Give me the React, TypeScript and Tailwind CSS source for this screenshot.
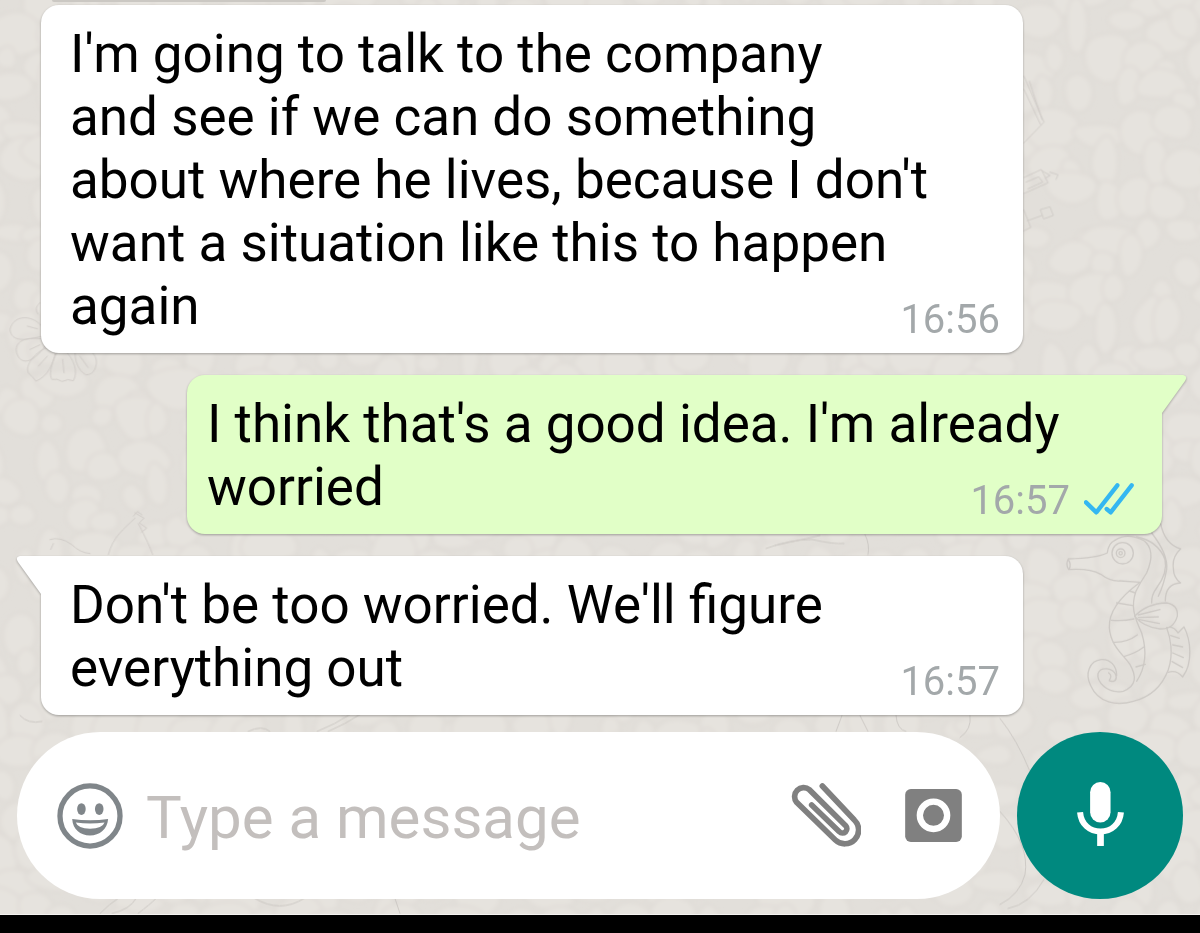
import type { ReactNode } from "react";

type Message = {
    id: number;
    lines: string[];
    time: string;
    outgoing?: boolean;
    tail?: boolean;
};

const messages: Message[] = [
    {
        id: 1,
        lines: [
            "I'm going to talk to the company",
            "and see if we can do something",
            "about where he lives, because I don't",
            "want a situation like this to happen",
            "again",
        ],
        time: "16:56",
    },
    {
        id: 2,
        lines: ["I think that's a good idea. I'm already", "worried"],
        time: "16:57",
        outgoing: true,
        tail: true,
    },
    {
        id: 3,
        lines: ["Don't be too worried. We'll figure", "everything out"],
        time: "16:57",
        tail: true,
    },
];

// small seeded generator so the stones keep their shape between renders
const createRandom = (seed: number) => () => {
    seed = (seed * 16807) % 2147483647;
    return seed / 2147483647;
};

const buildStones = () => {
    const random = createRandom(421);
    const stones: string[] = [];
    for (let row = 0; row < 30; row++) {
        for (let col = 0; col < 34; col++) {
            const cx = col * 38 + (row % 2) * 18 + random() * 26 - 16;
            const cy = row * 33 + random() * 24 - 14;
            const rx = 12 + random() * 20;
            const ry = 12 + random() * 18;
            const turn = random() * Math.PI;
            const points = Array.from({ length: 6 }, (_, i) => {
                const angle = turn + (i * Math.PI) / 3;
                const k = 0.75 + random() * 0.45;
                return [cx + Math.cos(angle) * rx * k, cy + Math.sin(angle) * ry * k];
            });
            const mids = points.map(([x, y], i) => {
                const [nx, ny] = points[(i + 1) % 6];
                return [(x + nx) / 2, (y + ny) / 2];
            });
            let d = `M${mids[5][0].toFixed(1)} ${mids[5][1].toFixed(1)}`;
            points.forEach(([x, y], i) => {
                d += `Q${x.toFixed(1)} ${y.toFixed(1)} ${mids[i][0].toFixed(1)} ${mids[i][1].toFixed(1)}`;
            });
            stones.push(d + "Z");
        }
    }
    return stones;
};

const stones = buildStones();

const Wallpaper = () => (
    <svg
        className="absolute inset-0 -z-10 h-full w-full"
        viewBox="0 0 1200 915"
        preserveAspectRatio="xMidYMid slice"
        aria-hidden="true"
    >
        <defs>
            <filter id="soften">
                <feGaussianBlur stdDeviation="2" />
            </filter>
        </defs>
        <rect width="1200" height="915" fill="#e2dfda" />
        <g fill="#e6e3de" stroke="#dedad5" strokeWidth="2" filter="url(#soften)">
            {stones.map((d, i) => (
                <path key={i} d={d} />
            ))}
        </g>

        <g fill="none" stroke="#c6c2be" strokeWidth="2.5" strokeLinecap="round" strokeLinejoin="round" opacity="0.75">
            {/* seahorse */}
            <g transform="translate(1000 520) scale(0.3333)" strokeWidth="4">
                <path d="M345 62Q325 70 322 100Q290 116 205 118Q196 134 206 150Q270 146 302 164Q330 186 360 184L420 188" />
                <path d="M206 122Q214 134 208 148M345 62Q380 38 430 62Q470 92 440 160Q420 190 408 215C392 260 402 290 425 340C440 390 440 440 410 485" />
                <circle cx="368" cy="101" r="32" />
                <circle cx="362" cy="101" r="13" />
                <circle cx="362" cy="101" r="5" />
                <path d="M418 190C370 225 325 270 328 325C332 380 370 405 390 435C410 470 410 500 370 515C320 525 290 485 294 462C302 440 340 444 348 468C352 484 340 488 328 484" />
                <path d="M328 482Q338 468 326 460M350 468C350 438 330 418 304 420C268 424 254 462 272 498C295 550 350 560 400 545C460 530 490 490 505 450C522 400 510 350 500 325" />
                <path d="M388 214L406 220M350 250L398 258M334 302Q370 305 402 298M340 368Q380 370 412 346M374 410Q405 402 432 382M408 442L436 434" />
                <path d="M410 52Q475 65 495 120Q504 160 470 205Q454 226 455 250M455 40Q505 105 500 150Q492 195 475 230" />
                <path d="M482 12Q494 74 542 88Q516 112 520 145Q520 175 542 190Q496 192 496 244" />
                <path d="M404 290Q440 252 500 250Q535 256 532 290Q520 330 480 328Q430 322 404 290M415 286L480 270M415 294L475 292M418 300L478 312" />
                <path d="M500 325Q520 318 534 340L552 322C572 360 580 430 548 472Q530 450 505 458M512 348L538 356M518 376L548 382M518 400L550 414M516 426L548 444" />
            </g>

            {/* flower */}
            <g transform="scale(0.3333)">
                <path d="M126 980C90 940 38 950 30 990C34 1030 80 1022 126 1010M124 1018C70 1010 42 1030 50 1060C62 1100 100 1090 135 1040M140 1045C100 1060 75 1100 85 1120Q96 1130 108 1145C145 1130 160 1090 166 1060M170 1060C150 1100 148 1130 156 1140Q172 1136 186 1146Q205 1136 220 1144C236 1115 220 1080 200 1058M225 1060C225 1100 246 1120 258 1126Q276 1126 284 1110C296 1085 286 1068 276 1058M120 910Q100 925 114 944" />
                <path d="M82 980L112 988M90 1050L120 1036M115 1100L142 1070M188 1080L192 1120M240 1070L264 1104" />
            </g>

            {/* ruler, shells and the rest of the scribbles */}
            <g transform="translate(1000 0) scale(0.3333)">
                <path d="M72 230L132 368L72 430M72 270L122 376M88 245L126 360M72 534L124 510L144 550L72 582M78 548L116 532L128 548L84 568M128 515L150 528L136 536M150 518L174 526L168 540" />
                <path d="M72 632L92 684L72 694M82 664L126 648M122 630L150 622L160 648L132 658Z" />
            </g>
            <g transform="translate(0 530) scale(0.3333)">
                <path d="M325 75C340 20 370 0 405 -34M415 -18Q450 50 458 75M150 30Q180 20 215 45Q240 70 270 72M160 42L152 60M405 -50L432 -34L418 -20L440 -4L424 8M400 -40L412 -54L426 -44" />
            </g>
            <path strokeWidth="1" d="M766 549Q790 540 812 540Q834 545 844 544M775 546L820 536M865 535Q870 545 868 555M1000 719Q1017 740 1030 772M1000 812Q1030 845 1025 875Q1020 895 1000 905M1008 909Q1030 905 1044 880" />
            <path strokeWidth="1" d="M842 716L836 732M860 716L868 732M896 716Q897 730 906 732M970 716Q972 730 960 738M317 732Q335 725 350 715M328 732Q345 725 360 715M248 732Q262 725 270 732M100 914Q110 904 118 899M112 914Q130 910 136 899M138 914Q150 905 156 899M255 899Q280 914 304 899M395 899L400 914M20 716Q28 725 42 722" />
        </g>
    </svg>
);

const ReadTicks = () => (
    <svg className="h-8 w-[50px]" viewBox="370 366 150 96" fill="none" stroke="#34b7f1" strokeWidth="13" role="img" aria-label="Read">
        <path d="M376 424L407 454L470 373" strokeLinejoin="round" strokeLinecap="round" />
        <path d="M438 444L450 454L513 373" strokeLinejoin="round" strokeLinecap="round" />
    </svg>
);

const Bubble = ({ message }: { message: Message }) => {
    const { lines, time, outgoing, tail } = message;
    const lastLine = lines[lines.length - 1];

    return (
        <li className={outgoing ? "pl-[187px] pr-[38px]" : "pl-[41px] pr-[177px]"}>
            <article
                className={`relative rounded-[18px] pt-[18px] pb-[15px] text-[53px] leading-[63px] text-black drop-shadow-[0_1px_1px_rgba(0,0,0,0.3)] ${
                    outgoing ? "bg-[#e1ffc7] pl-5 pr-7" : "bg-white pl-[29px] pr-[23px]"
                } ${tail ? (outgoing ? "rounded-tr-none" : "rounded-tl-none") : ""}`}
            >
                {tail && (
                    <svg
                        className={`absolute top-0 h-[39px] w-[26px] ${
                            outgoing ? "left-full -ml-px text-[#e1ffc7]" : "right-full -mr-px -scale-x-100 text-white"
                        }`}
                        viewBox="0 0 26 39"
                        fill="currentColor"
                        aria-hidden="true"
                    >
                        <path d="M0 0H22Q27 1 24 6L1 38V39H0Z" />
                    </svg>
                )}
                {lines.slice(0, -1).map((line) => (
                    <p key={line}>{line}</p>
                ))}
                <div className="flex items-end justify-between">
                    <p>{lastLine}</p>
                    <div className="flex items-start gap-[14px]">
                        <time className="text-[40px] leading-9 text-[#a3a8aa]">{time}</time>
                        {outgoing && <ReadTicks />}
                    </div>
                </div>
            </article>
        </li>
    );
};

const IconButton = ({ label, children }: { label: string; children: ReactNode }) => (
    <button type="button" aria-label={label} className="shrink-0 cursor-pointer">
        {children}
    </button>
);

const Composer = () => (
    <form className="flex items-center gap-[17px] px-[17px] pb-[15px]" onSubmit={(e) => e.preventDefault()}>
        <div className="flex h-[167px] min-w-0 flex-1 items-center rounded-full bg-white pl-10 pr-[38px]">
            <IconButton label="Emoji">
                <svg className="size-[66px]" viewBox="170 186 200 200" fill="#80868a">
                    <circle cx="270" cy="286" r="91" fill="none" stroke="#80868a" strokeWidth="16" />
                    <ellipse cx="244" cy="265" rx="13" ry="18" />
                    <ellipse cx="298" cy="265" rx="13" ry="18" />
                    <path d="M216 295Q270 303 325 295C322 326 300 345 270 345C240 345 218 326 216 295Z" />
                    <path fill="#fff" d="M227 306Q270 312 314 306Q308 324 270 325Q233 324 227 306Z" />
                </svg>
            </IconButton>
            <input
                type="text"
                aria-label="Message"
                placeholder="Type a message"
                className="ml-[23px] h-20 min-w-0 flex-1 bg-transparent pt-1 text-[60px] text-black outline-none placeholder:text-[#c3bfbd]"
            />
            <div className="flex items-center gap-11">
                <IconButton label="Attach">
                    <svg className="h-[65px] w-[70px]" viewBox="93 192 210 195" fill="none" stroke="#808080" strokeWidth="17" strokeLinecap="round">
                        <path d="M187 201L283 303A40 40 0 0 1 226 363L110 250A27 27 0 0 1 148 212L257 320A13 13 0 0 1 238 338L155 258" />
                    </svg>
                </IconButton>
                <IconButton label="Camera">
                    <svg className="h-[53px] w-[57px]" viewBox="435 207 170 159">
                        <rect x="435" y="207" width="170" height="159" rx="17" fill="#808080" />
                        <circle cx="520" cy="286" r="41" fill="none" stroke="#fff" strokeWidth="19" />
                    </svg>
                </IconButton>
            </div>
        </div>
        <button
            type="button"
            aria-label="Record voice message"
            className="flex h-[167px] w-[166px] shrink-0 cursor-pointer items-center justify-center rounded-full bg-[#00897f]"
        >
            <svg className="h-[67px] w-[47px]" viewBox="230 786 140 200" fill="#fff">
                <rect x="269" y="786" width="61" height="121" rx="30.5" />
                <path d="M239 876C242 912 268 934 300 934S358 912 361 876" fill="none" stroke="#fff" strokeWidth="18" />
                <rect x="290" y="934" width="20" height="43" />
            </svg>
        </button>
    </form>
);

const App = () => {
    return (
        <div className="flex min-h-screen flex-col bg-black font-['Roboto',sans-serif]">
            <main className="relative isolate flex flex-1 flex-col justify-end overflow-hidden border-b border-[#f4f2f0]">
                <Wallpaper />
                {/* lower edge of the bubble that has scrolled out of view */}
                <div className="mb-[3px] ml-[52px] mr-auto h-0.5 w-[274px] rounded-b-full bg-[#cbc8c3]" />
                <ul className="mb-[17px] flex flex-col gap-[22px]">
                    {messages.map((message) => (
                        <Bubble key={message.id} message={message} />
                    ))}
                </ul>
                <Composer />
            </main>
            <footer className="h-[18px] bg-black" />
        </div>
    );
};

export default App;
